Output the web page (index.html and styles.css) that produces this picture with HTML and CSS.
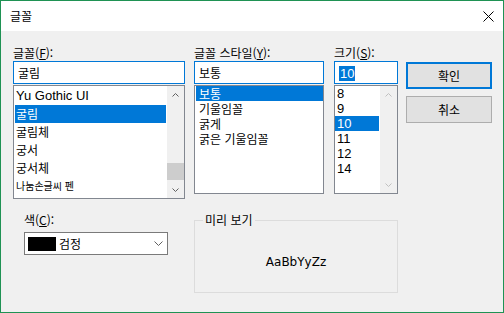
FILE: index.html
```html
<!DOCTYPE html>
<html lang="ko">
<head>
    <meta charset="UTF-8">
    <title>글꼴</title>
    <link rel="stylesheet" href="styles.css">
</head>
<body>
    <div class="window">
        <div class="titlebar">
            <span class="title">글꼴</span>
            <svg class="close" width="11" height="11" viewBox="0 0 11 11">
                <path d="M0.5 0.5 L10.5 10.5 M10.5 0.5 L0.5 10.5" stroke="#000" stroke-width="1" fill="none"/>
            </svg>
        </div>
        <div class="content">
            <div class="top">
                <div class="col col-font">
                    <div class="label">글꼴(<u>F</u>):</div>
                    <div class="edit">굴림</div>
                    <div class="list list-font">
                        <ul class="items">
                            <li class="item item-latin">Yu Gothic UI</li>
                            <li class="item selected">굴림</li>
                            <li class="item">굴림체</li>
                            <li class="item item-brush">궁서</li>
                            <li class="item item-brush">궁서체</li>
                            <li class="item item-hand">나눔손글씨 펜</li>
                        </ul>
                        <div class="scrollbar">
                            <div class="sb-btn">
                                <svg width="7" height="4" viewBox="0 0 7 4"><path d="M0.5 3.5 L3.5 0.5 L6.5 3.5" stroke="#606060" fill="none"/></svg>
                            </div>
                            <div class="sb-track"><div class="sb-thumb"></div></div>
                            <div class="sb-btn">
                                <svg width="7" height="4" viewBox="0 0 7 4"><path d="M0.5 0.5 L3.5 3.5 L6.5 0.5" stroke="#606060" fill="none"/></svg>
                            </div>
                        </div>
                    </div>
                </div>
                <div class="col col-style">
                    <div class="label">글꼴 스타일(<u>Y</u>):</div>
                    <div class="edit">보통</div>
                    <div class="list list-style">
                        <ul class="items">
                            <li class="item selected">보통</li>
                            <li class="item">기울임꼴</li>
                            <li class="item">굵게</li>
                            <li class="item">굵은 기울임꼴</li>
                        </ul>
                    </div>
                </div>
                <div class="col col-size">
                    <div class="label">크기(<u>S</u>):</div>
                    <div class="edit"><span class="edit-sel">10</span></div>
                    <div class="list list-size">
                        <ul class="items">
                            <li class="item">8</li>
                            <li class="item">9</li>
                            <li class="item selected">10</li>
                            <li class="item">11</li>
                            <li class="item">12</li>
                            <li class="item">14</li>
                        </ul>
                        <div class="scrollbar">
                            <div class="sb-btn">
                                <svg width="7" height="4" viewBox="0 0 7 4"><path d="M0.5 3.5 L3.5 0.5 L6.5 3.5" stroke="#c0c0c0" fill="none"/></svg>
                            </div>
                            <div class="sb-track"></div>
                            <div class="sb-btn">
                                <svg width="7" height="4" viewBox="0 0 7 4"><path d="M0.5 0.5 L3.5 3.5 L6.5 0.5" stroke="#c0c0c0" fill="none"/></svg>
                            </div>
                        </div>
                    </div>
                </div>
                <div class="buttons">
                    <button class="btn btn-default">확인</button>
                    <button class="btn">취소</button>
                </div>
            </div>
            <div class="bottom">
                <div class="color">
                    <div class="label">색(<u>C</u>):</div>
                    <div class="combo">
                        <span class="swatch"></span>
                        <span class="combo-text">검정</span>
                        <svg width="9" height="5" viewBox="0 0 9 5"><path d="M0.5 0.5 L4.5 4.5 L8.5 0.5" stroke="#606060" fill="none"/></svg>
                    </div>
                </div>
                <fieldset class="preview">
                    <legend>미리 보기</legend>
                    <div class="sample">AaBbYyZz</div>
                </fieldset>
            </div>
        </div>
    </div>
</body>
</html>
```

FILE: styles.css
```css
* {
    box-sizing: border-box;
}
html, body {
    margin: 0;
    padding: 0;
    background-color: #fff;
}
body {
    font-family: "Noto Sans CJK KR", sans-serif;
    font-size: 12px;
    color: #000;
}
.window {
    width: 504px;
    height: 313px;
    border: 1px solid #1f9254;
    background-color: #f0f0f0;
    display: flex;
    flex-direction: column;
}
.titlebar {
    height: 30px;
    flex-shrink: 0;
    background-color: #fff;
    display: flex;
    align-items: center;
    justify-content: space-between;
    padding: 0 9px 0 9px;
}
.title {
    line-height: 16px;
}
.close {
    display: block;
}
.content {
    padding: 14px 0 0 12px;
}
.top {
    display: flex;
    align-items: flex-start;
}
.col-font {
    width: 172px;
}
.col-style {
    width: 130px;
    margin-left: 9px;
}
.col-size {
    width: 64px;
    margin-left: 10px;
}
.label {
    height: 16px;
    line-height: 16px;
    white-space: nowrap;
}
.edit {
    height: 23px;
    border: 1px solid #0078d7;
    background-color: #fff;
    padding: 0 4px;
    line-height: 21px;
    margin-bottom: 1px;
    white-space: nowrap;
}
.edit-sel {
    background-color: #0078d7;
    color: #fff;
    padding: 0 1px;
    font-family: "Liberation Sans", sans-serif;
    font-size: 13px;
}
.list {
    border: 1px solid #828790;
    background-color: #fff;
    display: flex;
}
.list-font {
    height: 114px;
}
.list-style,
.list-size {
    height: 109px;
}
.items {
    list-style: none;
    margin: 0;
    padding: 0;
    flex: 1;
    min-width: 0;
    overflow: hidden;
}
.item {
    height: 15px;
    line-height: 15px;
    padding-left: 3px;
    white-space: nowrap;
}
.item.selected {
    background-color: #0078d7;
    color: #fff;
}
.list-font .items {
    padding: 1px 1px 0 1px;
}
.list-font .item {
    height: 18px;
    line-height: 18px;
    padding-left: 1px;
}
.list-style .items {
    padding-left: 1px;
}
.list-size .items {
    padding-right: 1px;
}
.list-size .item {
    font-family: "Liberation Sans", sans-serif;
    font-size: 13px;
    padding-left: 2px;
}
.item-latin {
    font-family: "Liberation Sans", sans-serif;
    font-size: 13px;
}
.item-brush {
    font-size: 12px;
}
.item-hand {
    font-size: 10px;
}
.scrollbar {
    width: 17px;
    flex-shrink: 0;
    background-color: #f0f0f0;
    display: flex;
    flex-direction: column;
}
.sb-btn {
    height: 17px;
    display: flex;
    align-items: center;
    justify-content: center;
}
.sb-btn svg {
    display: block;
}
.sb-track {
    flex: 1;
    display: flex;
    flex-direction: column;
    justify-content: flex-end;
}
.sb-thumb {
    height: 17px;
    background-color: #cdcdcd;
    margin-bottom: 1px;
}
.buttons {
    width: 86px;
    margin-left: 8px;
    margin-top: 17px;
    display: flex;
    flex-direction: column;
    gap: 7px;
}
.btn {
    height: 27px;
    padding: 0;
    background-color: #e1e1e1;
    border: 1px solid #adadad;
    font-family: inherit;
    font-size: 12px;
    color: #000;
}
.btn-default {
    border: 2px solid #0078d7;
}
.bottom {
    display: flex;
    align-items: flex-start;
    margin-top: 13px;
}
.color {
    width: 144px;
    margin-left: 11px;
}
.color .label {
    margin-bottom: 4px;
}
.combo {
    height: 23px;
    border: 1px solid #7a7a7a;
    background-color: #fff;
    display: flex;
    align-items: center;
    padding: 0 4px 0 3px;
}
.swatch {
    width: 28px;
    height: 14px;
    background-color: #000;
    margin-right: 3px;
}
.combo-text {
    flex: 1;
}
.combo svg {
    display: block;
}
.preview {
    width: 204px;
    height: 81px;
    margin: 0 0 0 26px;
    padding: 0;
    border: 1px solid #dcdcdc;
    min-width: 0;
}
.preview legend {
    margin-left: 8px;
    padding: 0 2px;
    line-height: 16px;
}
.sample {
    text-align: center;
    font-family: "DejaVu Sans", sans-serif;
    font-size: 12px;
    margin-top: 27px;
}
```
